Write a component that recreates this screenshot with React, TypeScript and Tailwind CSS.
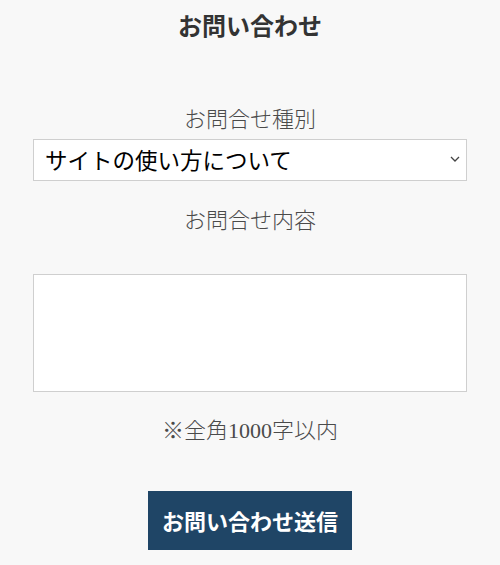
import React, { useState } from 'react';

const serif = "font-['Liberation_Serif','Noto_Sans_CJK_JP',serif]";
const sans = "font-['Noto_Sans_CJK_JP','Noto_Sans',sans-serif]";

export default function App() {
  const [kind, setKind] = useState('サイトの使い方について');
  const [body, setBody] = useState('');

  return (
    <div className={`min-h-[565px] w-[500px] bg-[#f8f8f8] ${serif}`}>
      {/* Title */}
      <h1 className={`pt-[7px] text-center text-[24px] font-bold leading-[36px] text-[#333] ${sans}`}>
        お問い合わせ
      </h1>

      <form className="mt-[58px] flex flex-col items-center" onSubmit={(e) => e.preventDefault()}>
        <label className="text-[22px] font-light leading-[38px] text-[#4a4a4a]">お問合せ種別</label>
        <div className="relative w-[434px]">
          <select
            value={kind}
            onChange={(e) => setKind(e.target.value)}
            className={`h-[42px] w-full appearance-none border border-[#cfcfcf] bg-white pl-[11px] text-[22.5px] text-black outline-none ${sans}`}
          >
            <option>サイトの使い方について</option>
            <option>その他</option>
          </select>
          <svg className="pointer-events-none absolute right-[6px] top-[15px] h-[10px] w-[12px]" viewBox="0 0 12 10" fill="none" stroke="#444" strokeWidth="1.3">
            <path d="M2 3l4 4 4-4" />
          </svg>
        </div>

        <label className="mt-[21px] text-[22px] font-light leading-[38px] text-[#4a4a4a]">お問合せ内容</label>
        <textarea
          value={body}
          onChange={(e) => setBody(e.target.value)}
          className="mt-[34px] h-[118px] w-[434px] resize-none border border-[#cfcfcf] bg-white outline-none"
        />

        <p className="mt-[20px] text-[22px] font-light leading-[38px] text-[#4a4a4a]">※全角1000字以内</p>

        <button
          type="submit"
          className={`mt-[41px] h-[59px] w-[204px] bg-[#1f4566] text-[22px] font-bold text-white ${sans}`}
        >
          お問い合わせ送信
        </button>
      </form>
    </div>
  );
}
